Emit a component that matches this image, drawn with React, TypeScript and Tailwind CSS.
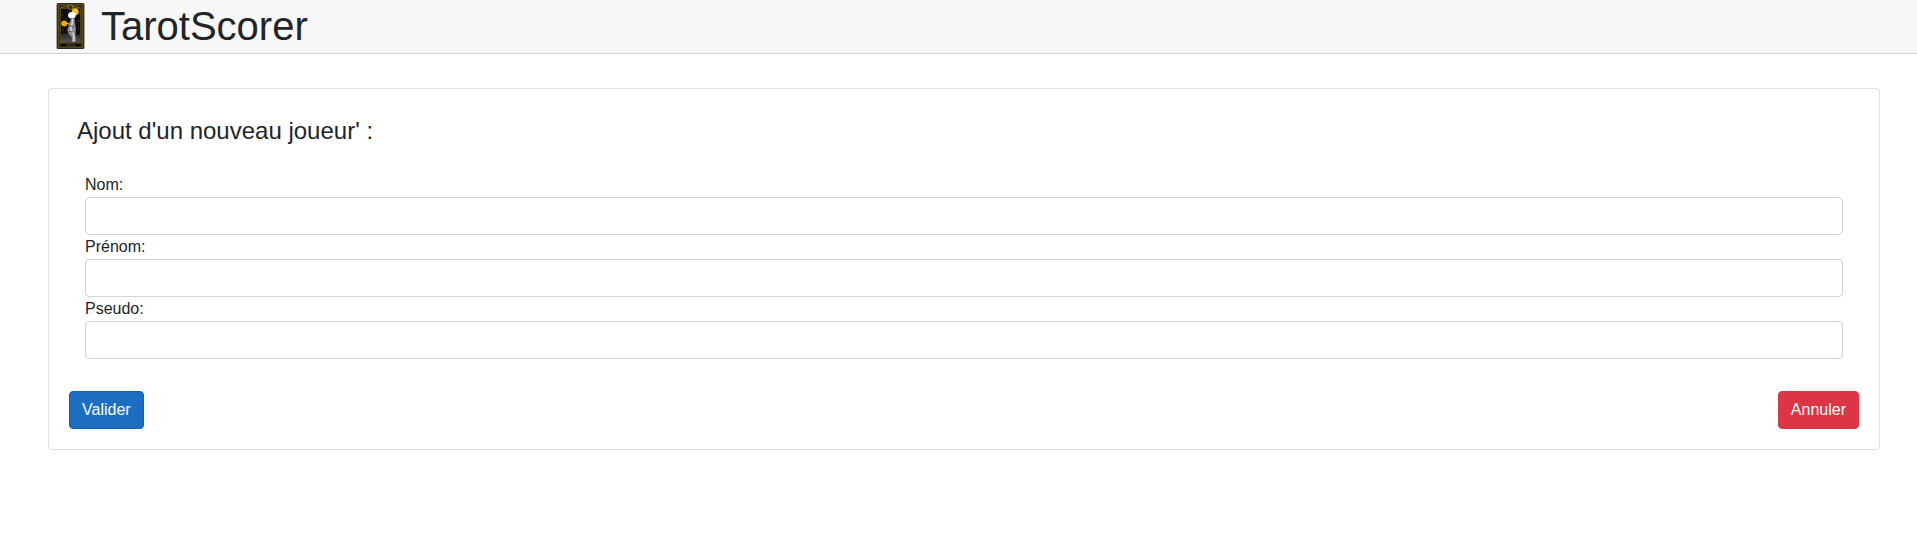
import React from "react";

function TarotCardLogo() {
  return (
    <svg className="mt-px" width="29" height="46" viewBox="0 0 29 46" aria-hidden="true">
      <defs>
        <filter id="soft" x="-10%" y="-10%" width="120%" height="120%">
          <feGaussianBlur stdDeviation="0.5" />
        </filter>
        <linearGradient id="ground" x1="0" y1="0" x2="0" y2="1">
          <stop offset="0" stopColor="#222" />
          <stop offset="1" stopColor="#555" />
        </linearGradient>
      </defs>
      <g transform="translate(0.6 0)">
        <rect x="0" y="0" width="27.8" height="46" rx="1.5" fill="#2f2a1d" />
        <g filter="url(#soft)">
          <rect x="1.7" y="1.8" width="24.4" height="42.4" fill="none" stroke="#6a571a" strokeWidth="0.9" />
          <rect x="3.6" y="5.2" width="20.6" height="34.6" fill="#070707" stroke="#7c651b" strokeWidth="0.8" />
          <path d="M4 32 Q8 28 12 31 T23.8 31 V39.3 H4Z" fill="url(#ground)" />
          <path d="M4 5 Q13.8 1 23.5 5" fill="none" stroke="#80671c" />
          <circle cx="14" cy="4.2" r="2.3" fill="#302b19" stroke="#a08326" strokeWidth="0.9" />
          <circle cx="18.6" cy="8.8" r="3.5" fill="#fdbd25" />
          <circle cx="7.6" cy="20.4" r="3" fill="#e5a51a" />
          <path d="M8.8 20.4 H12" stroke="#edbf4a" strokeWidth="1" />
          <ellipse cx="15.3" cy="12.3" rx="3.8" ry="3.2" fill="#ffffff" />
          <path d="M14 15 H17.8 L18.3 20 L19.3 26 L18.8 32 L19.3 38 L15.5 39 L15.2 34 L12 31 L10.6 27 L12.2 23 L11 20.5 L13.7 19Z" fill="#8f8f8f" />
          <path d="M16 16 L15.5 21 L14 26 L16.5 30 L17.5 34 L17 38.5" fill="none" stroke="#d4d4d4" strokeWidth="1.6" />
          <path d="M12 22.5 L17.5 24 M11.5 28 L17 29" stroke="#555" strokeWidth="0.9" />
          <path d="M5.5 12h1M9 16h1M21.5 18h1M21.5 25h1M6 27h1" stroke="#888" strokeWidth="0.8" />
          <rect x="4" y="41.2" width="5.3" height="2" fill="#080806" />
          <rect x="10.8" y="40.8" width="6.5" height="2.3" fill="#302810" />
          <rect x="18.6" y="41.2" width="5.3" height="2" fill="#080806" />
        </g>
      </g>
    </svg>
  );
}

function Field({ id, label }: { id: string; label: string }) {
  return (
    <div className="flex flex-col">
      <label htmlFor={id} className="h-6 self-start leading-6">
        {label}
      </label>
      <input
        id={id}
        type="text"
        className="h-[38px] w-full rounded border border-[#ced4da] bg-white px-3 text-[#495057] outline-none"
      />
    </div>
  );
}

export default function App() {
  return (
    <div className="min-h-screen bg-white font-['Liberation_Sans',Arial,sans-serif] text-base text-[#212529]">
      <header className="flex h-[54px] items-start border-b border-[#d0d1d2] bg-[#f7f7f7] pt-0.5 pl-14">
        <TarotCardLogo />
        <h1 className="ml-4 text-[40px] leading-[48px] font-normal">TarotScorer</h1>
      </header>
      <main className="pt-[34px] pr-[37px] pl-12">
        <form
          className="h-[362px] rounded border border-[#dfdfdf] p-5"
          onSubmit={(event) => event.preventDefault()}
        >
          <h2 className="px-2 pt-2 text-2xl leading-[28.8px] font-normal">
            Ajout d'un nouveau joueur' :
          </h2>
          <div className="mt-[27.2px] px-4">
            <Field id="nom" label="Nom:" />
            <Field id="prenom" label="Prénom:" />
            <Field id="pseudo" label="Pseudo:" />
          </div>
          <div className="mt-8 flex justify-between">
            <button
              type="submit"
              className="h-[38px] rounded border border-[#1861ac] bg-[#1b6ec2] px-3 leading-6 text-white"
            >
              Valider
            </button>
            <button
              type="button"
              className="h-[38px] rounded border border-[#dc3545] bg-[#dc3545] px-3 leading-6 text-white"
            >
              Annuler
            </button>
          </div>
        </form>
      </main>
    </div>
  );
}
